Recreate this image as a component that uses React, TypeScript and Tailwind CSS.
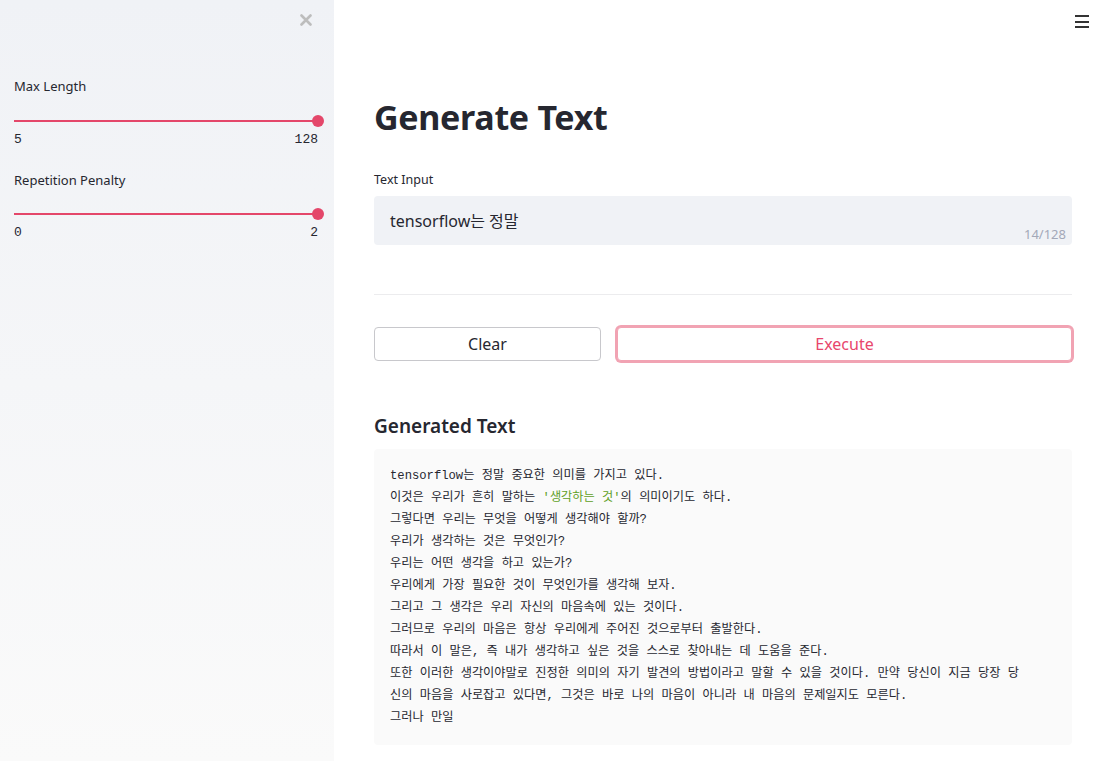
import React from 'react';

const SANS = { fontFamily: '"Noto Sans", "Noto Sans CJK KR", sans-serif' };
const MONO = { fontFamily: '"Liberation Mono", "Noto Sans CJK KR", monospace' };

const Slider = ({ min, max }: { min: string; max: string }) => (
  <>
    <div className="relative h-[26px] mt-[12px]">
      <div className="absolute left-0 right-0 top-[12px] h-[2px] bg-[#e4476a]" />
      <div className="absolute right-[-6px] top-[7px] w-[12px] h-[12px] rounded-full bg-[#e4476a]" />
    </div>
    <div className="flex justify-between h-[12px] leading-[12px] text-[13px] text-[#262730]" style={MONO}>
      <span>{min}</span>
      <span>{max}</span>
    </div>
  </>
);

const lines: React.ReactNode[] = [
  'tensorflow는 정말 중요한 의미를 가지고 있다.',
  <>
    이것은 우리가 흔히 말하는 <span className="text-[#5f9f1f]">'생각하는 것'</span>의 의미이기도 하다.
  </>,
  '그렇다면 우리는 무엇을 어떻게 생각해야 할까?',
  '우리가 생각하는 것은 무엇인가?',
  '우리는 어떤 생각을 하고 있는가?',
  '우리에게 가장 필요한 것이 무엇인가를 생각해 보자.',
  '그리고 그 생각은 우리 자신의 마음속에 있는 것이다.',
  '그러므로 우리의 마음은 항상 우리에게 주어진 것으로부터 출발한다.',
  '따라서 이 말은, 즉 내가 생각하고 싶은 것을 스스로 찾아내는 데 도움을 준다.',
  '또한 이러한 생각이야말로 진정한 의미의 자기 발견의 방법이라고 말할 수 있을 것이다. 만약 당신이 지금 당장 당',
  '신의 마음을 사로잡고 있다면, 그것은 바로 나의 마음이 아니라 내 마음의 문제일지도 모른다.',
  '그러나 만일',
];

export default function App() {
  return (
    <div className="flex min-h-screen bg-white text-[#262730]" style={SANS}>
      {/* Sidebar */}
      <aside className="w-[334px] shrink-0 min-h-screen bg-linear-to-b from-[#f0f2f6] to-[#fafafa] pl-[14px] pr-[16px]">
        <div className="h-[40px] flex justify-end items-center">
          <svg width="12" height="12" viewBox="0 0 12 12" className="mr-[6px]">
            <path d="M1.5 1.5 L10.5 10.5 M10.5 1.5 L1.5 10.5" stroke="#bdbdbd" strokeWidth="2.6" strokeLinecap="round" />
          </svg>
        </div>
        <div className="mt-[36px] h-[20px] leading-[20px] text-[13px]">Max Length</div>
        <Slider min="5" max="128" />
        <div className="mt-[24px] h-[20px] leading-[20px] text-[13px]">Repetition Penalty</div>
        <div className="-mt-[1px]">
          <Slider min="0" max="2" />
        </div>
      </aside>

      {/* Main */}
      <main className="relative flex-1 pl-[40px] pt-[95px] pb-[16px]">
        <div className="absolute top-[15px] right-[18px] w-[14px] flex flex-col gap-[3.5px]">
          <div className="h-[2px] bg-[#333]" />
          <div className="h-[2px] bg-[#333]" />
          <div className="h-[2px] bg-[#333]" />
        </div>

        <div className="w-[698px]">
          <h1 className="text-[34px] leading-[44px] font-bold tracking-[-0.3px]">Generate Text</h1>

          <div className="mt-[31px] h-[20px] leading-[20px] text-[12.5px]">Text Input</div>
          <div className="relative mt-[6px] h-[49px] rounded-[4px] bg-[#f0f2f6] flex items-center px-[16px] text-[16px]">
            tensorflow는 정말
            <span className="absolute right-[6px] bottom-[1px] text-[13px] text-[#a3a8b8]">14/128</span>
          </div>

          <div className="mt-[49px] border-t border-[#ececee]" />

          <div className="mt-[32px] flex gap-[16px]">
            <button className="w-[227px] h-[34px] rounded-[4px] border border-[#c8c8cc] bg-white text-[16px]">Clear</button>
            <button className="flex-1 h-[34px] rounded-[4px] border border-[#f1a3b3] ring-2 ring-[#f1a3b3] bg-white text-[16px] text-[#e8466c]">
              Execute
            </button>
          </div>

          <h3 className="mt-[51px] text-[19px] leading-[28px] font-semibold">Generated Text</h3>

          <div className="mt-[9px] bg-[#fafafa] rounded-[4px] px-[16px] py-[16px] text-[12.2px] leading-[22px] text-[#262730]" style={MONO}>
            {lines.map((l, i) => (
              <div key={i} className="whitespace-pre">
                {l}
              </div>
            ))}
          </div>
        </div>
      </main>
    </div>
  );
}
